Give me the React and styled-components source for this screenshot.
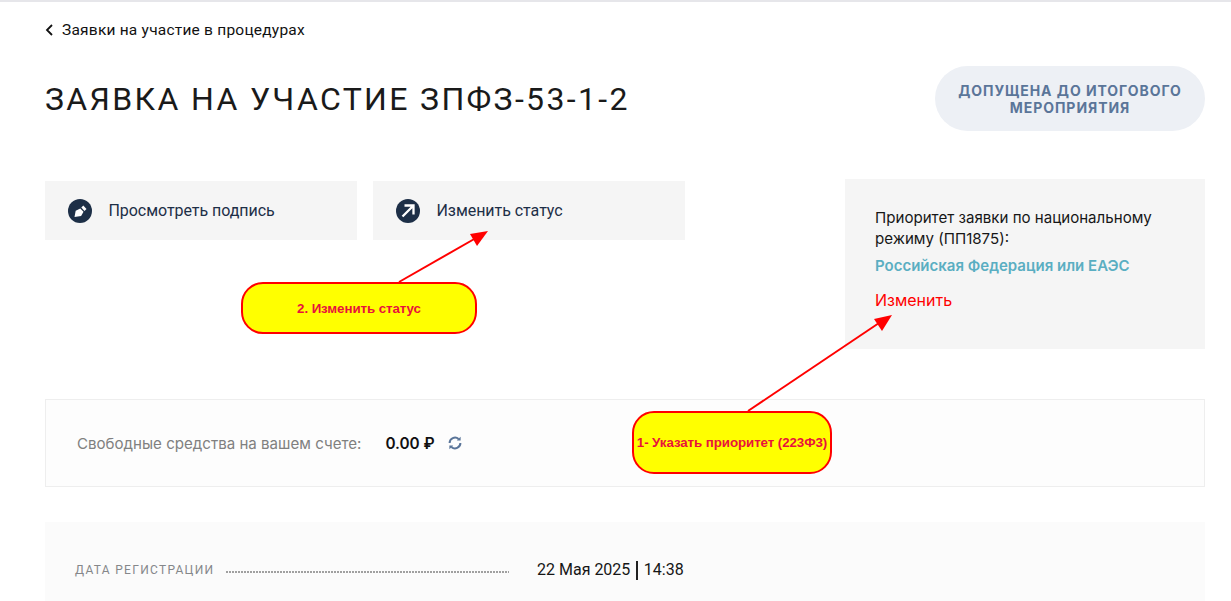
import React from "react";
import styled, { createGlobalStyle } from "styled-components";

const Global = createGlobalStyle`
  html, body { margin: 0; padding: 0; background: #fff; height: 601px; overflow: hidden; }
  * { box-sizing: border-box; }
`;

const Page = styled.div`
  position: relative;
  width: 1231px;
  height: 601px;
  overflow: hidden;
  border-top: 2px solid #e6e6ea;
  padding: 0 26px 0 45px;
  font-family: Roboto, "Liberation Sans", sans-serif;
`;

const BackLink = styled.a`
  display: flex;
  align-items: center;
  gap: 8px;
  height: 20px;
  margin-top: 18px;
  font-size: 15.5px;
  line-height: 20px;
  letter-spacing: 0.22px;
  color: #111;
`;

const TitleRow = styled.div`
  display: flex;
  justify-content: space-between;
  align-items: center;
  height: 65px;
  margin-top: 26px;
`;

const Title = styled.h1`
  margin: 0;
  font-size: 32px;
  font-weight: 400;
  line-height: 40px;
  letter-spacing: 2.34px;
  color: #1a1a1a;
`;

const StatusPill = styled.div`
  display: flex;
  align-items: center;
  justify-content: center;
  width: 270px;
  height: 65px;
  border-radius: 33px;
  background: #edf0f5;
  color: #5a7599;
  font-family: Inter, sans-serif;
  font-size: 14px;
  font-weight: 700;
  line-height: 17px;
  letter-spacing: 0.95px;
  text-align: center;
  text-transform: uppercase;
`;

const ActionRow = styled.div`
  display: flex;
  justify-content: space-between;
  align-items: flex-start;
  margin-top: 48px;
`;

const Actions = styled.div`
  display: flex;
  gap: 16px;
  margin-top: 2px;
`;

const ActionCard = styled.button`
  display: flex;
  align-items: center;
  gap: 16.5px;
  width: 312px;
  height: 59px;
  padding: 0 0 0 23px;
  border: 0;
  background: #f5f5f5;
  font-family: Roboto, sans-serif;
  font-size: 16px;
  letter-spacing: -0.05px;
  color: #1d2f47;
`;

const PriorityPanel = styled.aside`
  width: 360px;
  height: 170px;
  padding: 28px 30px 0;
  background: #f5f5f5;
  font-family: Inter, sans-serif;
`;

const PriorityLabel = styled.div`
  font-size: 15.1px;
  line-height: 21px;
  color: #171717;
`;

const PriorityValue = styled.div`
  margin-top: 7px;
  font-size: 15px;
  line-height: 20px;
  font-weight: 600;
  color: #5aaec2;
`;

const ChangeLink = styled.a`
  display: block;
  margin-top: 13px;
  font-size: 16px;
  line-height: 22px;
  color: #ff0000;
`;

const BalanceBar = styled.div`
  display: flex;
  align-items: center;
  height: 88px;
  margin-top: 50px;
  padding: 0 0 0 31px;
  border: 1px solid #eeeeee;
  background: #fdfdfd;
  font-family: Inter, sans-serif;
`;

const BalanceLabel = styled.span`
  font-size: 15.1px;
  color: #808080;
`;

const BalanceValue = styled.span`
  margin-left: 24px;
  font-size: 15.3px;
  font-weight: 600;
  color: #111;
`;

const RefreshIcon = styled.svg`
  margin-left: 13px;
`;

const DetailsBlock = styled.div`
  height: 79px;
  margin-top: 35px;
  padding: 37px 0 0 30px;
  display: flex;
  align-items: flex-start;
  background: #fbfbfb;
  font-family: Roboto, sans-serif;
`;

const DetailLabel = styled.span`
  width: 141px;
  flex: none;
  font-size: 12px;
  line-height: 22px;
  letter-spacing: 1.3px;
  text-transform: uppercase;
  color: #85878a;
`;

const DotLeader = styled.span`
  width: 283px;
  height: 2px;
  margin: 12px 28px 0 10px;
  flex: none;
  background-image: radial-gradient(circle at 1px 1px, #a0a0a0 0.8px, transparent 1px);
  background-size: 3px 2px;
  background-repeat: repeat-x;
`;

const DetailValue = styled.span`
  display: flex;
  align-items: center;
  font-size: 16px;
  line-height: 22px;
  color: #161616;
`;

const ValueDivider = styled.span`
  width: 1.5px;
  height: 19px;
  margin: 0 6px;
  background: #222;
`;

const Overlay = styled.svg`
  position: absolute;
  left: 0;
  top: -2px;
  pointer-events: none;
`;

const Callout = styled.div`
  position: absolute;
  left: ${(p) => p.$x}px;
  top: ${(p) => p.$y - 2}px;
  width: ${(p) => p.$w}px;
  height: ${(p) => p.$h}px;
  display: flex;
  align-items: center;
  justify-content: center;
  border: 2px solid #ff0000;
  border-radius: 22px;
  background: #ffff00;
  color: #e8123c;
  font-family: "Liberation Sans", Arial, sans-serif;
  font-size: 13.33px;
  font-weight: 700;
  letter-spacing: -0.08px;
  white-space: nowrap;
`;

const Chevron = () => (
  <svg width="9" height="12" viewBox="0 0 9 12" fill="none">
    <path d="M7 1 2 6l5 5" stroke="#111" strokeWidth="1.8" />
  </svg>
);

const PenIcon = () => (
  <svg width="24" height="24" viewBox="0 0 24 24">
    <circle cx="12" cy="12" r="12" fill="#1d2f47" />
    <path d="M6.5 18l1.2-6.2 4.6-2.4 3.2 3.4-2.4 4.2z" fill="#fff" />
    <path d="M13.3 8.6l2-2 3.2 3.3-2 2.1z" fill="#fff" />
  </svg>
);

const ArrowIcon = () => (
  <svg width="24" height="24" viewBox="0 0 24 24" fill="none">
    <circle cx="12" cy="12" r="12" fill="#1d2f47" />
    <path d="M6.5 17.5 17 7M8.5 6.5h9v9" stroke="#fff" strokeWidth="2.3" />
  </svg>
);

export default function App() {
  return (
    <>
      <Global />
      <Page>
        <BackLink>
          <Chevron />
          Заявки на участие в процедурах
        </BackLink>
        <TitleRow>
          <Title>ЗАЯВКА НА УЧАСТИЕ ЗПФЗ-53-1-2</Title>
          <StatusPill>
            Допущена до итогового
            <br />
            мероприятия
          </StatusPill>
        </TitleRow>
        <ActionRow>
          <Actions>
            <ActionCard>
              <PenIcon />
              Просмотреть подпись
            </ActionCard>
            <ActionCard>
              <ArrowIcon />
              Изменить статус
            </ActionCard>
          </Actions>
          <PriorityPanel>
            <PriorityLabel>
              Приоритет заявки по национальному
              <br />
              режиму (ПП1875):
            </PriorityLabel>
            <PriorityValue>Российская Федерация или ЕАЭС</PriorityValue>
            <ChangeLink>Изменить</ChangeLink>
          </PriorityPanel>
        </ActionRow>
        <BalanceBar>
          <BalanceLabel>Свободные средства на вашем счете:</BalanceLabel>
          <BalanceValue>0.00 ₽</BalanceValue>
          <RefreshIcon width="14" height="14" viewBox="0 0 14 14" fill="none">
            <path d="M1.6 7a5.4 5.4 0 0 1 9-4" stroke="#5a7599" strokeWidth="2" />
            <path d="M12.4 7a5.4 5.4 0 0 1-9 4" stroke="#5a7599" strokeWidth="2" />
            <path d="M12.6 .8v3.8H8.8z" fill="#5a7599" />
            <path d="M1.4 13.2V9.4h3.8z" fill="#5a7599" />
          </RefreshIcon>
        </BalanceBar>
        <DetailsBlock>
          <DetailLabel>Дата регистрации</DetailLabel>
          <DotLeader />
          <DetailValue>
            22 Мая 2025
            <ValueDivider />
            14:38
          </DetailValue>
        </DetailsBlock>
        <Overlay width="1231" height="601" viewBox="0 0 1231 601">
          <path d="M399 282 476 238" stroke="#f00" strokeWidth="2" />
          <path d="M488 231 470 234 477 246z" fill="#f00" />
          <path d="M748 411 879 323" stroke="#f00" strokeWidth="2" />
          <path d="M892 315 874 319 882 331z" fill="#f00" />
        </Overlay>
        <Callout $x={241} $y={282} $w={236} $h={52}>2. Изменить статус</Callout>
        <Callout $x={632} $y={411} $w={200} $h={63}>1- Указать приоритет (223Ф3)</Callout>
      </Page>
    </>
  );
}
